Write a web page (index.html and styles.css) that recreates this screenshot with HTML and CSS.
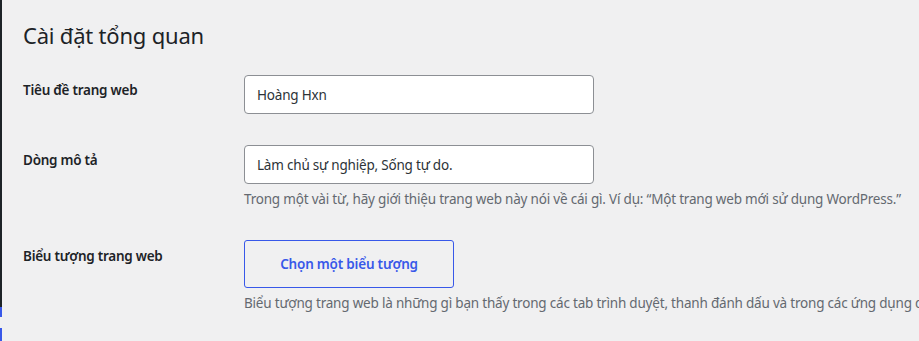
FILE: index.html
```html
<!DOCTYPE html>
<html lang="vi">
<head>
<meta charset="utf-8">
<link rel="stylesheet" href="styles.css">
</head>
<body>
<div class="page">
  <div class="edge">
    <div class="edge-dark"></div>
    <div class="edge-blue"></div>
    <div class="edge-gap"></div>
    <div class="edge-blue2"></div>
  </div>
  <main class="content">
    <h1 class="title">Cài đặt tổng quan</h1>
    <div class="form">
      <div class="row row-1">
        <div class="label">Tiêu đề trang web</div>
        <div class="field">
          <div class="input">Hoàng Hxn</div>
        </div>
      </div>
      <div class="row row-2">
        <div class="label">Dòng mô tả</div>
        <div class="field">
          <div class="input">Làm chủ sự nghiệp, Sống tự do.</div>
          <p class="desc">Trong một vài từ, hãy giới thiệu trang web này nói về cái gì. Ví dụ: “Một trang web mới sử dụng WordPress.”</p>
        </div>
      </div>
      <div class="row row-3">
        <div class="label">Biểu tượng trang web</div>
        <div class="field">
          <button class="btn" type="button">Chọn một biểu tượng</button>
          <p class="desc">Biểu tượng trang web là những gì bạn thấy trong các tab trình duyệt, thanh đánh dấu và trong các ứng dụng di động WordPress.</p>
        </div>
      </div>
    </div>
  </main>
</div>
</body>
</html>
```
FILE: styles.css
```css
html, body {
  margin: 0;
  padding: 0;
  background: #f0f0f1;
  overflow: hidden;
}
body {
  width: 919px;
  height: 341px;
  font-family: "Noto Sans", "Open Sans", sans-serif;
  color: #1d2327;
  font-size: 13.5px;
  letter-spacing: -0.2px;
}
.page {
  display: flex;
  height: 341px;
}
.edge {
  width: 2px;
  flex: none;
  display: flex;
  flex-direction: column;
}
.edge-dark { height: 307px; background: #1d2327; }
.edge-blue { height: 10px; background: #3858e9; }
.edge-gap { height: 11px; background: #f0f0f1; }
.edge-blue2 { height: 13px; background: #3858e9; }
.content {
  flex: 1;
  padding-left: 21px;
  min-width: 0;
  overflow: hidden;
}
.title {
  margin: 21px 0 0;
  font-size: 22px;
  font-weight: 400;
  line-height: 29px;
  letter-spacing: -0.2px;
}
.form {
  margin-top: 25px;
}
.row {
  display: grid;
  grid-template-columns: 221px 1fr;
}
.label {
  font-weight: 600;
  font-size: 13.5px;
  letter-spacing: -0.25px;
  line-height: 20px;
  padding-top: 5px;
}
.row-2 { margin-top: 31px; }
.row-3 { margin-top: 32px; }
.row-3 .label { padding-top: 6px; }
.field { min-width: 0; }
.input {
  box-sizing: border-box;
  width: 350px;
  height: 39px;
  background: #fff;
  border: 1px solid #8c8f94;
  border-radius: 4px;
  padding: 0 12px;
  display: flex;
  align-items: center;
  font-size: 13.5px;
  color: #2c3338;
}
.desc {
  margin: 6px 0 0;
  color: #646970;
  font-size: 13.5px;
  line-height: 18px;
  white-space: nowrap;
}
.btn {
  box-sizing: border-box;
  width: 210px;
  height: 48px;
  background: transparent;
  border: 1px solid #3858e9;
  border-radius: 3px;
  color: #3858e9;
  font-family: inherit;
  font-size: 13.5px;
  letter-spacing: -0.2px;
  font-weight: 600;
  padding: 0;
  cursor: pointer;
}
.row-3 .desc { margin-top: 6px; }
```
